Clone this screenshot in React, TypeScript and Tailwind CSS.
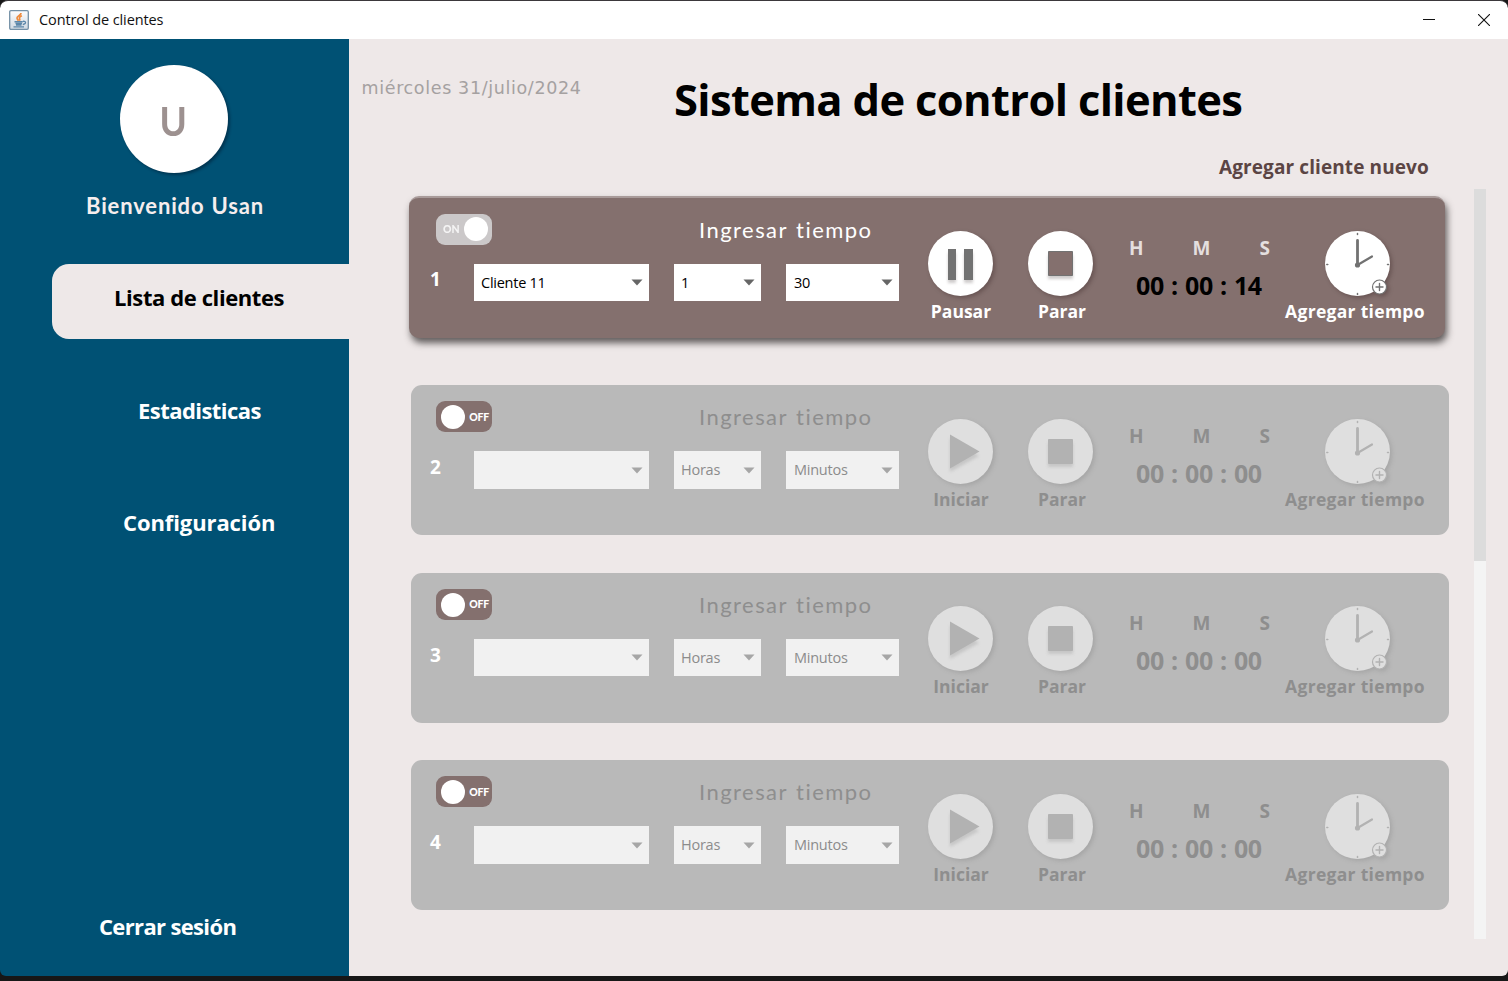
import React from "react";
import clsx from "clsx";

type Row = { id: number; on: boolean; client: string; hours: string; minutes: string; time: string };

const rows: Row[] = [
  { id: 1, on: true, client: "Cliente 11", hours: "1", minutes: "30", time: "00 : 00 : 14" },
  { id: 2, on: false, client: "", hours: "Horas", minutes: "Minutos", time: "00 : 00 : 00" },
  { id: 3, on: false, client: "", hours: "Horas", minutes: "Minutos", time: "00 : 00 : 00" },
  { id: 4, on: false, client: "", hours: "Horas", minutes: "Minutos", time: "00 : 00 : 00" },
];

function JavaIcon() {
  return (
    <svg width="20" height="20" viewBox="0 0 20 20" fill="none">
      <defs>
        <linearGradient id="jbg" x1="0" y1="0" x2="0" y2="1">
          <stop offset="0" stopColor="#fdfdfe" />
          <stop offset="1" stopColor="#cfd9e2" />
        </linearGradient>
      </defs>
      <rect x="0.7" y="0.7" width="18.6" height="18.6" rx="1.2" fill="url(#jbg)" stroke="#7390a6" strokeWidth="1.3" />
      <path d="M12 3c.3 2.200-4 3-4 5 0 1.200.9 1.900 1.500 2.700M12.900 5.800c-1.900.8-2.900 1.600-2.400 2.700.4.900.6 1.200-.1 2.200" stroke="#ee8a3c" strokeWidth="1.700" />
      <path d="M5.500 11.700h8.300M6.500 13.500h6.500M7 15h5.500M4.500 16.900h10.500" stroke="#5c87a9" strokeWidth="1.400" />
      <path d="M14 11.300c3.400-.4 3.400 2.500-.2 3.200" stroke="#5c87a9" strokeWidth="1.300" />
    </svg>
  );
}

function TitleBar() {
  return (
    <header className="flex h-[39px] items-center rounded-t-lg border-t border-[#3b383b] bg-white pl-[9px] pr-[18px] text-[#111]">
      <JavaIcon />
      <span className="ml-[10px] text-[14.5px] tracking-[-0.1px]">Control de clientes</span>
      <svg className="ml-auto" width="12" height="12" viewBox="0 0 12 12" stroke="#111">
        <path d="M0 5.500h12" />
      </svg>
      <svg className="ml-[43px]" width="12" height="12" viewBox="0 0 12 12" stroke="#111" strokeWidth="1.100">
        <path d="M0 0l12 12M12 0L0 12" />
      </svg>
    </header>
  );
}

function Sidebar() {
  return (
    <aside className="flex w-[349px] shrink-0 flex-col bg-[#005174] text-[22px] font-bold leading-[30px] text-white">
      <div className="ml-[120px] mt-[26px] flex size-[108px] items-center justify-center rounded-full bg-white pr-[2px] pt-[4px] font-['Comic_Sans_MS','Lato',cursive] text-[41px] font-bold text-[#9d9190] shadow-[2px_2px_3px_rgba(0,20,40,0.45)]">
        <span className="scale-x-90">U</span>
      </div>
      <div className="ml-[86px] mt-[18px] whitespace-nowrap font-['Comic_Sans_MS','Lato',sans-serif] text-[22px] tracking-[0.85px] [word-spacing:1px] text-[#f6eeee]">
        Bienvenido Usan
      </div>
      <nav className="mt-[43px] flex flex-col">
        <a className="ml-[52px] flex h-[75px] items-center rounded-l-[17px] bg-[#eee8e8] pb-[9px] pl-[62px] tracking-[-0.4px] text-black">Lista de clientes</a>
        <a className="ml-[138px] mt-[56px] tracking-[-0.55px]">Estadisticas</a>
        <a className="ml-[123px] mt-[82px] tracking-[-0.1px]">Configuración</a>
      </nav>
      <a className="mb-[35px] ml-[99px] mt-auto tracking-[-0.65px]">Cerrar sesión</a>
    </aside>
  );
}

function Toggle({ on }: { on: boolean }) {
  return (
    <div
      className={clsx(
        "flex h-[31px] w-[56px] items-center justify-between rounded-[9px] font-['Lato'] text-[10.5px] font-black text-white",
        on ? "bg-[#cbc8c9] pl-[7px] pr-[4px]" : "flex-row-reverse bg-[#84706e] pl-[5px] pr-[3px]"
      )}
    >
      <span className={on ? "pt-px opacity-80" : "pt-[2px] tracking-[-0.2px]"}>{on ? "ON" : "OFF"}</span>
      <span className={clsx("size-[24px] rounded-full bg-white", !on && "mt-px")} />
    </div>
  );
}

function Select({ value, on, className }: { value: string; on: boolean; className: string }) {
  return (
    <div
      className={clsx(
        "flex h-[37.5px] items-center justify-between text-[14.5px] tracking-[-0.25px]",
        on ? "bg-white text-black" : "bg-[#f1f1f1] text-[#8c8c8c]",
        className
      )}
    >
      <span className="pt-px">{value}</span>
      <svg className="mt-px" width="12" height="7" viewBox="0 0 12 7" fill={on ? "#666" : "#a6a6a6"}>
        <path d="M0.500 0.500h11L6 6.500z" />
      </svg>
    </div>
  );
}

function RoundIcon({ kind, on }: { kind: "pause" | "play" | "stop" | "clock"; on: boolean }) {
  const face = on ? "#ffffff" : "#dfdfdf";
  const ink = on ? "#727272" : "#b2b2b2";
  const shade = on ? "#cfcccc" : "#c6c6c6";
  return (
    <svg
      width="66"
      height="66"
      viewBox="0 0 66 66"
      className={clsx(
        "overflow-visible",
        on ? "drop-shadow-[2px_2px_2px_rgba(60,40,40,0.4)]" : "drop-shadow-[2px_2px_2px_rgba(90,90,90,0.2)]"
      )}
    >
      <circle cx="32.500" cy="32.500" r="32.500" fill={face} />
      {kind === "pause" && (
        <g>
          <path className="blur-[1.5px]" d="M20 22h8v30h-8zM36 22h9v30h-9z" fill={shade} />
          <path d="M20 18h8v31h-8zM36 18h9v31h-9z" fill={ink} />
        </g>
      )}
      {kind === "play" && (
        <g>
          <path className="blur-[1.5px]" d="M22 19v34l29-16z" fill={shade} />
          <path d="M22 15.500v34l29.500-17z" fill={ink} />
        </g>
      )}
      {kind === "stop" && (
        <g>
          <path className="blur-[1.5px]" d="M20 24h25v24H20z" fill={shade} />
          <path d="M20.500 20.500h24v24h-24z" fill={on ? "#84706e" : ink} stroke={ink} />
        </g>
      )}
      {kind === "clock" && (
        <g stroke={ink} fill="none" strokeLinecap="round">
          <path d="M32.500 33.500V9.500" strokeWidth="2.800" />
          <path d="M32.500 34L47 25.500" strokeWidth="2.200" />
          <circle cx="32.500" cy="34" r="1.600" fill={ink} strokeWidth="2" />
          <path d="M32.500 2.500v1M32.500 62.500v1M1.800 33.500h1M62.500 33.500h1" strokeWidth="1.500" />
          <circle cx="54.500" cy="56" r="7" fill={face} strokeWidth="1.200" />
          <path d="M51 56h7M54.500 52.500v7" strokeWidth="1.400" />
        </g>
      )}
    </svg>
  );
}

function ClientRow({ row }: { row: Row }) {
  const on = row.on;
  const top = on ? "pt-[33px]" : "pt-[33.9px]";
  const label = clsx("whitespace-nowrap text-[17.5px] font-bold", on ? "leading-[29px]" : "leading-[28px]");
  return (
    <div className="h-[150px] w-[1038px]">
      <article
        className={clsx(
          "flex",
          on
            ? "-ml-[2px] -mt-[2px] h-[142px] w-[1036px] rounded-[10px] border-t-2 border-[#a99b9a] bg-[#84706e] pl-[2px] text-white shadow-[2px_5px_7px_rgba(50,45,45,0.75)]"
            : "h-[150px] w-[1038px] rounded-[11px] bg-[#b9b9b9] text-[#8e8e8e]"
        )}
      >
        <div className="w-[488px] shrink-0 pt-[16px]">
          <div className="flex pl-[25px]">
            <Toggle on={on} />
            <span className="ml-[207px] whitespace-nowrap font-['Comic_Sans_MS','Lato',sans-serif] text-[22px] leading-[32px] tracking-[1.45px] [word-spacing:1.5px]">
              Ingresar tiempo
            </span>
          </div>
          <div className="mt-[18px] flex">
            <span className={clsx("w-[63px] pl-[19px] text-[19px] font-bold text-white", on ? "leading-[30px]" : "leading-[32px]")}>{row.id}</span>
            <Select value={row.client} on={on} className="w-[175px] pl-[7px] pr-[6px]" />
            <Select value={row.hours} on={on} className="ml-[25px] w-[87px] pl-[7px] pr-[6px]" />
            <Select value={row.minutes} on={on} className="ml-[25px] w-[113px] pl-[8px] pr-[6px]" />
          </div>
        </div>
        <div className={clsx("ml-[22px] flex w-[80px] flex-col items-center", top)}>
          <RoundIcon kind={on ? "pause" : "play"} on={on} />
          <span className={label}>{on ? "Pausar" : "Iniciar"}</span>
        </div>
        <div className={clsx("ml-[20px] flex w-[80px] flex-col items-center", top)}>
          <RoundIcon kind="stop" on={on} />
          <span className={clsx(label, "ml-[2px]")}>Parar</span>
        </div>
        <div className={clsx("ml-[28px] w-[141px] font-bold", on ? "pt-[35px]" : "pt-[35.9px]")}>
          <div className={clsx("flex justify-between text-[19px] leading-[30px]", on && "text-[#e4dfdf]")}>
            <span>H</span>
            <span>M</span>
            <span>S</span>
          </div>
          <div className={clsx("mt-[4px] whitespace-nowrap pl-[7px] text-[25px] leading-[36px] tracking-[-0.35px] [word-spacing:1px]", on && "text-black")}>
            {row.time}
          </div>
        </div>
        <div className={clsx("ml-[5px] flex w-[160px] flex-col items-center", top)}>
          <div className="ml-[6px]">
            <RoundIcon kind="clock" on={on} />
          </div>
          <span className={clsx(label, "tracking-[0.3px]")}>Agregar tiempo</span>
        </div>
      </article>
    </div>
  );
}

export default function App() {
  return (
    <div className="flex h-[981px] w-[1508px] flex-col overflow-hidden bg-[#171717] font-['Open_Sans','Noto_Sans',sans-serif]">
      <TitleBar />
      <div className="flex h-[937px] overflow-hidden rounded-b-md">
        <Sidebar />
        <main className="flex flex-1 flex-col bg-[#eee8e8]">
          <div className="flex h-[110px]">
            <span className="ml-[12.5px] mt-[34px] w-[220.5px] whitespace-nowrap font-['DejaVu_Sans',sans-serif] text-[17.5px] font-normal leading-[30px] tracking-[0.65px] text-[#a5a1a1]">
              miércoles 31/julio/2024
            </span>
            <h1 className="ml-[92px] mt-[31px] whitespace-nowrap text-[43.5px] font-bold leading-[60px] tracking-[-0.65px] text-black">Sistema de control clientes</h1>
          </div>
          <button className="ml-[870px] mt-[2px] h-[33px] w-[212px] whitespace-nowrap text-left text-[19px] font-bold tracking-[0.1px] text-[#5b4544]">
            Agregar cliente nuevo
          </button>
          <div className="mt-[5px] flex">
            <div className="mt-[8.5px] flex w-[1125px] flex-col gap-[37.5px] pl-[62px]">
              {rows.map((row) => (
                <ClientRow key={row.id} row={row} />
              ))}
            </div>
            <div className="h-[750px] w-[12px] bg-[#f4f4f4]">
              <div className="h-[372px] bg-[#dcdcdc]" />
            </div>
          </div>
        </main>
      </div>
    </div>
  );
}
